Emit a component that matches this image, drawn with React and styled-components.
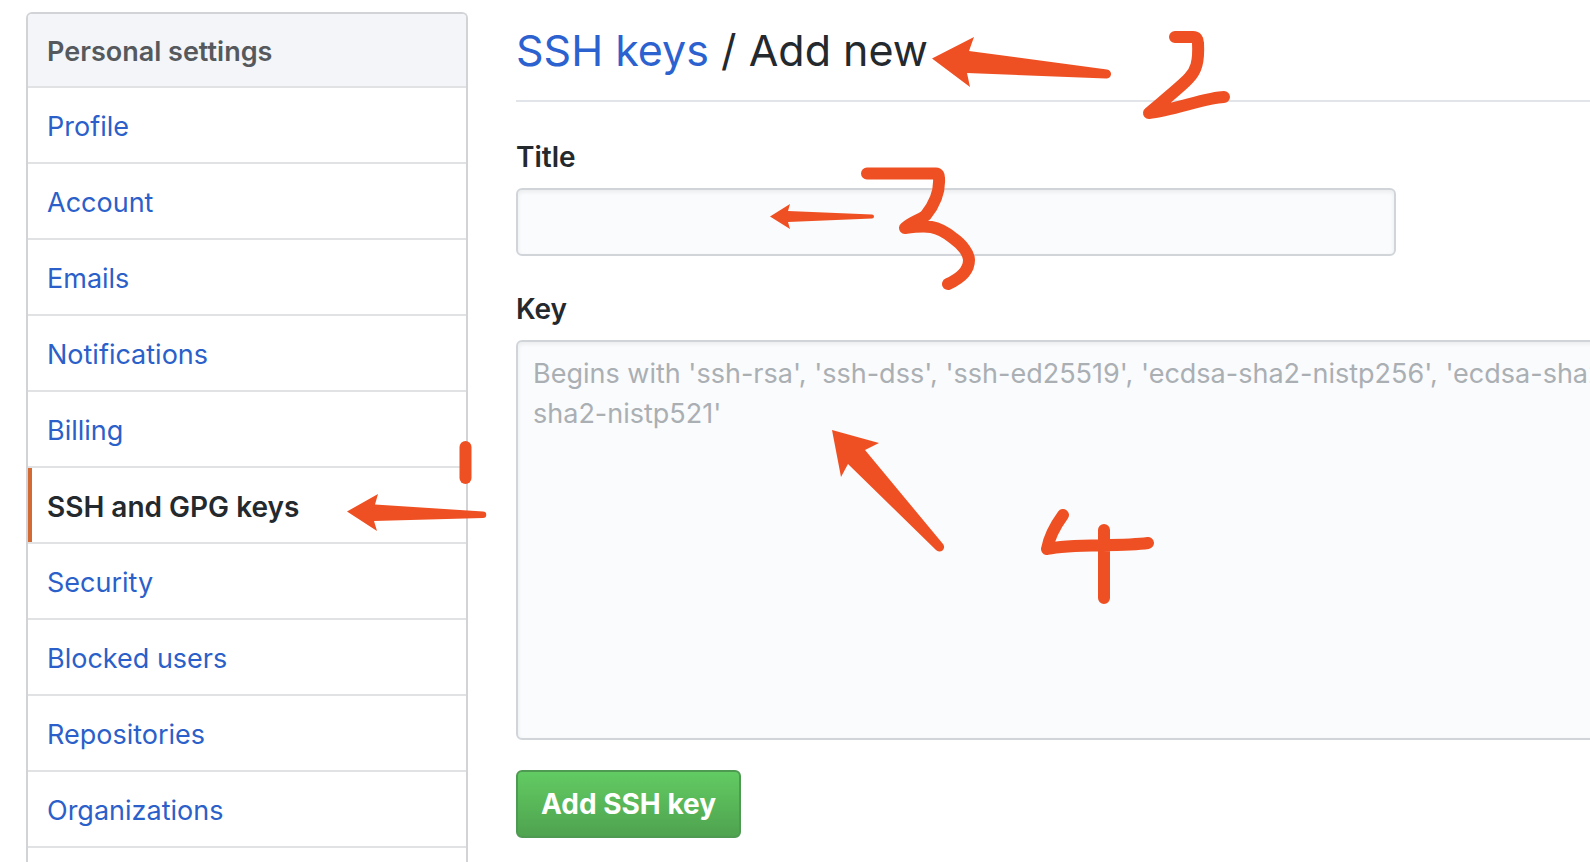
import React from 'react'
import styled, { createGlobalStyle } from 'styled-components'

const GlobalStyle = createGlobalStyle`
    * {
        box-sizing: border-box;
    }

    body {
        margin: 0;
        background: #fff;
        color: #24292e;
        font: 400 27px/42px Inter, "Liberation Sans", sans-serif;
    }
`

const Page = styled.div`
    position: relative;
    display: flex;
    align-items: stretch;
    gap: 48px;
    min-height: 100vh;
    padding: 12px 0 0 26px;
    overflow: hidden;
`

const Menu = styled.nav`
    display: flex;
    flex: 0 0 442px;
    flex-direction: column;
    border: 2px solid #d1d3d6;
    border-bottom: 0;
    border-radius: 6px 6px 0 0;
`

const MenuHeading = styled.h2`
    margin: 0;
    padding: 17px 19px 13px;
    border-bottom: 2px solid #e1e2e4;
    border-radius: 4px 4px 0 0;
    background: #f3f5f8;
    color: #55595e;
    font-size: 27px;
    font-weight: 600;
`

const MenuList = styled.ul`
    display: flex;
    flex-direction: column;
    margin: 0;
    padding: 0;
    list-style: none;
`

const MenuItem = styled.li`
    display: flex;
    border-bottom: 2px solid #e1e2e4;
`

const MenuLink = styled.a`
    flex: 1;
    padding: 18px 15px 14px;
    border-left: 4px solid ${ props => props.$selected ? '#d26a35' : 'transparent' };
    color: ${ props => props.$selected ? '#24292e' : '#2b5fc9' };
    font-size: ${ props => props.$selected ? '28px' : '27px' };
    font-weight: ${ props => props.$selected ? 600 : 400 };
    text-decoration: none;
`

// the column keeps its desktop width and runs off narrower windows
const Main = styled.main`
    display: flex;
    flex: 1 0 1444px;
    flex-direction: column;
    gap: 34px;
`

const Subhead = styled.h1`
    margin: 0;
    padding: 2px 0 14px;
    border-bottom: 2px solid #e1e4e8;
    font-size: 43px;
    font-weight: 400;
    line-height: 72px;
`

const SubheadLink = styled.a`
    color: #2b62d0;
    text-decoration: none;
`

const Form = styled.form`
    display: flex;
    flex-direction: column;
    align-items: flex-start;
    gap: 30px;
`

const Field = styled.div`
    display: flex;
    flex-direction: column;
    gap: 10px;
    width: ${ props => props.$wide ? '100%' : '880px' };
`

const Label = styled.label`
    padding-top: ${ props => props.$spaced ? '2px' : '0' };
    font-size: 28px;
    font-weight: 600;
`

const TextInput = styled.input`
    width: 100%;
    height: 68px;
    padding: 12px 15px;
    border: 2px solid #d1d5da;
    border-radius: 6px;
    background: #fafbfc;
    box-shadow: inset 0 2px 4px rgba(27, 31, 35, 0.07);
    color: inherit;
    font: inherit;
    outline: none;
`

const TextArea = styled(TextInput)`
    display: block;
    height: 400px;
    line-height: 40px;
    resize: none;

    &::placeholder {
        color: #aaafb4;
        opacity: 1;
    }
`

const SubmitButton = styled.button`
    height: 68px;
    padding: 0 23px;
    border: 2px solid #4f9a52;
    border-radius: 6px;
    background: linear-gradient(#62cb62, #4fa34f);
    color: #fff;
    font: inherit;
    font-size: 28px;
    font-weight: 700;
`

const Overlay = styled.svg`
    position: absolute;
    inset: 0;
    width: 100%;
    height: 100%;
    pointer-events: none;
`

const Stroke = styled.path`
    fill: none;
    stroke: #ef5023;
    stroke-width: 12;
    stroke-linecap: round;
    stroke-linejoin: round;
`

const Arrow = styled.path`
    fill: #ef5023;
`

const items = [
    'Profile',
    'Account',
    'Emails',
    'Notifications',
    'Billing',
    'SSH and GPG keys',
    'Security',
    'Blocked users',
    'Repositories',
    'Organizations'
]

const SettingsMenu = ({ selected }) => (
    <Menu>
        <MenuHeading>Personal settings</MenuHeading>
        <MenuList>
            { items.map(item => (
                <MenuItem key={ item }>
                    <MenuLink href="#" $selected={ item === selected }>{ item }</MenuLink>
                </MenuItem>
            )) }
        </MenuList>
    </Menu>
)

// hand drawn steps 1 to 4, each with its arrow
const Steps = () => (
    <Overlay aria-hidden="true">
        <g>
            <Stroke transform="translate(459 441)" d="M6.5 6V37" />
            <Arrow transform="translate(347 494)" d="M0 17.500L31 0L28 10.500L136 17.500A3.200 3.200 0 0 1 136 24L27 27L30 37Z" />
        </g>
        <g>
            <Stroke transform="translate(1143 31)" d="M32 6H50Q55 6 55 12C56 31 53 40 46 47C40 54 20 70 6 82C28 80 65 66 81 66" />
            <Arrow transform="translate(932 37)" d="M0 21.500L42 0L37 14L175 32.500A4.500 4.500 0 0 1 174 41.500L35 36L38 50Z" />
        </g>
        <g>
            <Stroke transform="translate(861 167)" d="M6 6.500H75Q78 6.500 78 11C79 26 73 38 65 48C60 53 52 54 44 61C66 58 76 58 92 71C102 78 108 87 108 93C108 105 98 112 87 117" />
            <Arrow transform="translate(770 204)" d="M0 12.500L20 0L18 7L102 10.500A2 2 0 0 1 102 14.500L18 18L20 25Z" />
        </g>
        <g>
            <Stroke transform="translate(1041 508)" d="M22 7C14 18 8 30 6 41C30 35 78 39 107 35M63 22V90" />
            <Arrow transform="translate(832 430)" d="M0 0L47 13L33 20L111 114A4.500 4.500 0 0 1 104 120L16 34L9 47Z" />
        </g>
    </Overlay>
)

const App = () => (
    <>
        <GlobalStyle />
        <Page>
            <SettingsMenu selected="SSH and GPG keys" />
            <Main>
                <Subhead><SubheadLink href="#">SSH keys</SubheadLink> / Add new</Subhead>
                <Form onSubmit={ e => e.preventDefault() }>
                    <Field>
                        <Label htmlFor="key-title">Title</Label>
                        <TextInput id="key-title" type="text" />
                    </Field>
                    <Field $wide>
                        <Label htmlFor="key-body" $spaced>Key</Label>
                        <TextArea
                            as="textarea"
                            id="key-body"
                            placeholder="Begins with 'ssh-rsa', 'ssh-dss', 'ssh-ed25519', 'ecdsa-sha2-nistp256', 'ecdsa-sha2-nistp384', or 'ecdsa-sha2-nistp521'"
                        />
                    </Field>
                    <SubmitButton type="submit">Add SSH key</SubmitButton>
                </Form>
            </Main>
            <Steps />
        </Page>
    </>
)

export default App
